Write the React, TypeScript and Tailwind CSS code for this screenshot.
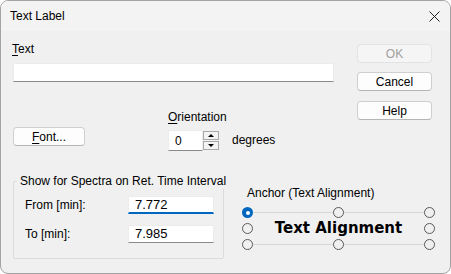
import React from 'react';

const Radio: React.FC<{ checked?: boolean }> = ({ checked }) =>
  checked ? (
    <span className="w-[11px] h-[11px] shrink-0 rounded-full bg-[#0067c0] flex items-center justify-center">
      <span className="w-[4px] h-[4px] rounded-full bg-white" />
    </span>
  ) : (
    <span className="w-[11px] h-[11px] shrink-0 rounded-full border border-[#5a5a5a] bg-[#f0f0f0]" />
  );

const Btn: React.FC<{ label: React.ReactNode; disabled?: boolean; className?: string }> = ({
  label,
  disabled,
  className = 'w-[75px]',
}) => (
  <button
    className={
      'h-[19px] rounded-[4px] border flex items-center justify-center leading-none ' +
      (disabled
        ? 'border-[#e3e3e3] bg-[#f5f5f5] text-[#a0a0a0] '
        : 'border-[#cfcfcf] border-b-[#b5b5b5] bg-[#fdfdfd] text-black ') +
      className
    }
  >
    {label}
  </button>
);

export default function App() {
  return (
    <div className="w-[451px] h-[274px] bg-[#f0f0f0] border border-[#a3a3a3] rounded-[8px] overflow-hidden flex flex-col font-['Liberation_Sans',Arial,sans-serif] text-[12px] text-black">
      {/* title bar */}
      <div className="h-[30px] shrink-0 bg-[#f3f3f3] flex items-center justify-between pl-[9px] pr-[9px]">
        <span className="leading-[15px]">Text Label</span>
        <svg width="11" height="11" viewBox="0 0 11 11" className="mr-[1px]">
          <path d="M0.5 0.5 L10.5 10.5 M10.5 0.5 L0.5 10.5" stroke="#222" strokeWidth="1" />
        </svg>
      </div>

      <div className="flex-1 flex flex-col pl-[11px]">
        {/* top section */}
        <div className="h-[143px] flex">
          <div className="w-[322px] flex flex-col">
            <div className="mt-[11px] leading-[15px]">
              <span className="underline underline-offset-2">T</span>ext
            </div>
            <div className="mt-[6px] ml-[1px] h-[19px] bg-white border border-[#ececec] border-b-[#8a8a8a]" />
            <div className="flex">
              <div className="mt-[45px] ml-[1px]">
                <Btn
                  className="w-[72px]"
                  label={
                    <>
                      <span className="underline underline-offset-2">F</span>ont...
                    </>
                  }
                />
              </div>
              <div className="ml-[83px] flex flex-col">
                <div className="mt-[28px] leading-[15px]">
                  <span className="underline underline-offset-2">O</span>rientation
                </div>
                <div className="mt-[5px] flex items-center">
                  <div className="w-[35px] h-[21px] bg-white border border-[#ececec] border-b-[#8a8a8a] flex items-center pl-[6px]">
                    0
                  </div>
                  <div className="w-[16px] h-[21px] flex flex-col gap-[1px] py-[1px]">
                    <div className="flex-1 border border-[#a9a9a9] bg-[#f3f3f3] flex items-center justify-center">
                      <span className="w-0 h-0 border-l-[3px] border-r-[3px] border-b-[3px] border-l-transparent border-r-transparent border-b-black" />
                    </div>
                    <div className="flex-1 border border-[#a9a9a9] bg-[#f3f3f3] flex items-center justify-center">
                      <span className="w-0 h-0 border-l-[3px] border-r-[3px] border-t-[3px] border-l-transparent border-r-transparent border-t-black" />
                    </div>
                  </div>
                  <span className="ml-[13px] leading-[15px]">degrees</span>
                </div>
              </div>
            </div>
          </div>
          <div className="ml-[23px] flex flex-col pt-[13px]">
            <Btn disabled label="OK" />
            <Btn className="w-[75px] mt-[9px]" label="Cancel" />
            <Btn className="w-[75px] mt-[10px]" label="Help" />
          </div>
        </div>

        {/* bottom section */}
        <div className="flex">
          <fieldset className="ml-[1px] w-[211px] min-w-0 h-[85px] shrink-0 border border-[#dcdcdc] rounded-[2px]">
            <legend className="ml-[3px] px-[3px] leading-[15px] whitespace-nowrap">Show for Spectra on Ret. Time Interval</legend>
            <div className="pl-[11px] pr-[9px]">
              <div className="mt-[7px] flex items-center justify-between">
                <span className="leading-[15px]">From [min]:</span>
                <div className="w-[86px] h-[18px] bg-white border border-[#ececec] border-b-2 border-b-[#0067c0] flex items-center pl-[6px] text-[13px]">
                  7.772
                </div>
              </div>
              <div className="mt-[11px] flex items-center justify-between">
                <span className="leading-[15px]">To [min]:</span>
                <div className="w-[86px] h-[18px] bg-white border border-[#ececec] border-b-[#8a8a8a] flex items-center pl-[6px] text-[13px]">
                  7.985
                </div>
              </div>
            </div>
          </fieldset>

          <div className="ml-[18px] flex flex-col">
            <div className="mt-[12px] ml-[5px] leading-[15px]">Anchor (Text Alignment)</div>
            <div className="mt-[6px] w-[193px] flex flex-col gap-[5px]">
              <div className="h-[11px] flex items-center">
                <Radio checked />
                <span className="flex-1 h-px bg-[#d6d6d6]" />
                <Radio />
                <span className="flex-1 h-px bg-[#d6d6d6]" />
                <Radio />
              </div>
              <div className="h-[11px] flex items-center">
                <Radio />
                <span className="flex-1 text-center leading-[11px] font-['DejaVu_Sans',sans-serif] font-bold text-[15px]">
                  Text Alignment
                </span>
                <Radio />
              </div>
              <div className="h-[11px] flex items-center">
                <Radio />
                <span className="flex-1 h-px bg-[#d6d6d6]" />
                <Radio />
                <span className="flex-1 h-px bg-[#d6d6d6]" />
                <Radio />
              </div>
            </div>
          </div>
        </div>
      </div>
    </div>
  );
}
